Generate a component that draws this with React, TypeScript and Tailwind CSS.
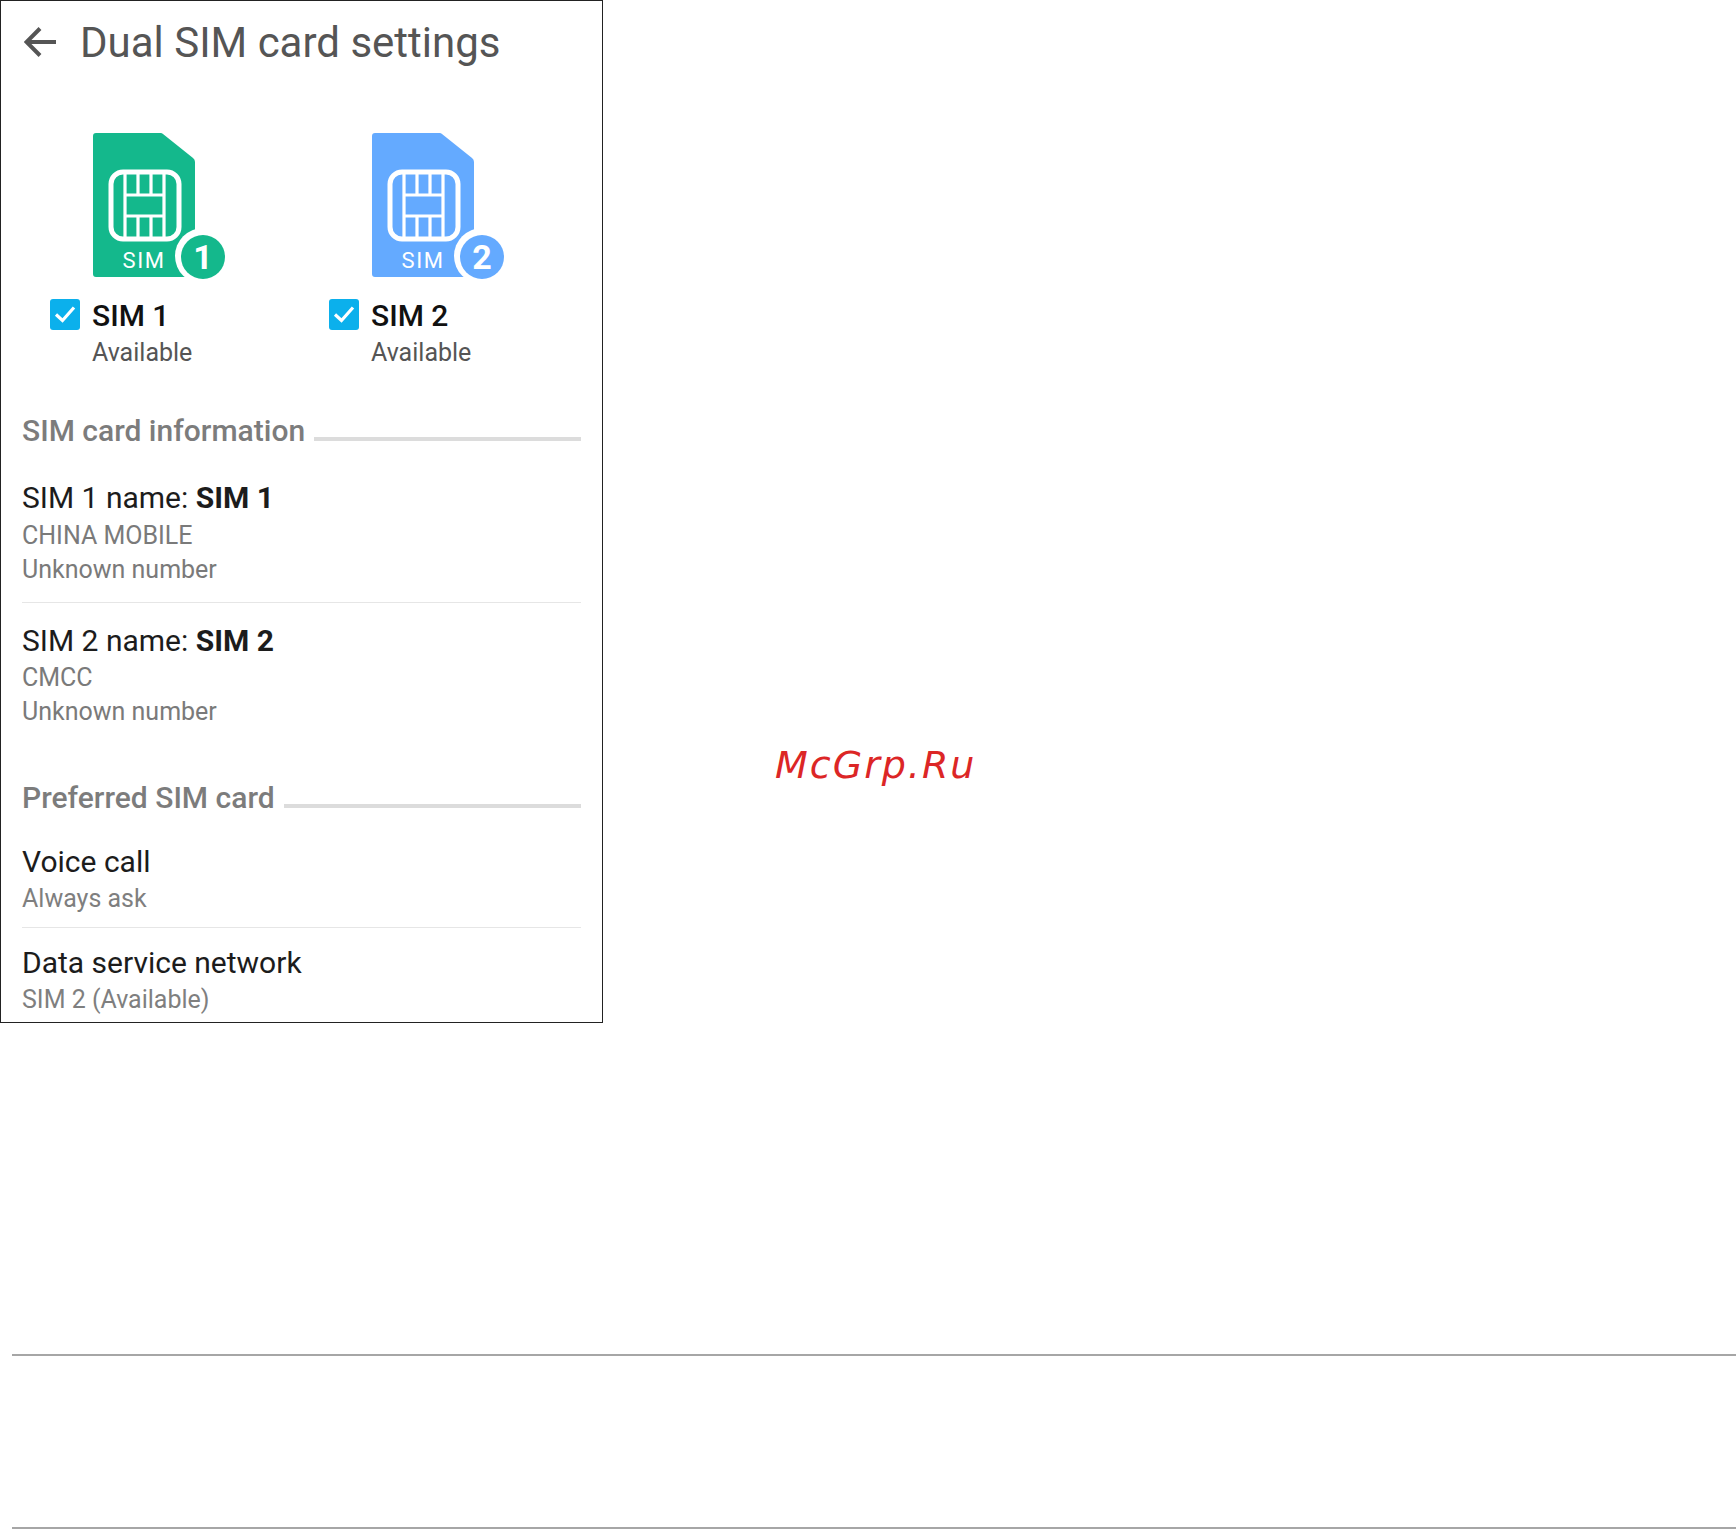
import React from "react";

const SimIcon = ({ color, num }: { color: string; num: string }) => {
  return (
    <svg width="134" height="148" viewBox="0 0 134 148" className="block">
      <path
        d="M3 0H67a4 4 0 0 1 3 1L100 25a5 5 0 0 1 2 4V141a3 3 0 0 1-3 3H3a3 3 0 0 1-3-3V3a3 3 0 0 1 3-3Z"
        fill={color}
      />
      <g fill="none" stroke="#fff">
        <rect x="18" y="39" width="68" height="67" rx="12" strokeWidth="5" />
        <path
          d="M32 40V105M71 40V105M45 40V62M58 40V62M45 83V105M58 83V105M32 62H71M32 83H71"
          strokeWidth="3.2"
        />
      </g>
      <text
        x="51"
        y="135"
        textAnchor="middle"
        fill="#fff"
        fontFamily="Roboto, sans-serif"
        fontSize="22"
        letterSpacing="1.5"
      >
        SIM
      </text>
      <circle cx="110" cy="123" r="28" fill="#fff" />
      <circle cx="110" cy="124" r="22" fill={color} />
      <text
        x="110"
        y="136"
        textAnchor="middle"
        fill="#fff"
        fontFamily="Roboto, sans-serif"
        fontWeight="700"
        fontSize="34"
      >
        {num}
      </text>
    </svg>
  );
};

const SimCard = ({ color, num }: { color: string; num: string }) => {
  return (
    <div className="w-[279px] shrink-0">
      <div className="ml-[43px]">
        <SimIcon color={color} num={num} />
      </div>
      <div className="flex items-center mt-[18px] h-[32px]">
        <div className="w-[30px] h-[31px] mb-[2px] rounded-[3px] bg-[#0bb0ec] flex items-center justify-center">
          <svg width="22" height="18" viewBox="0 0 22 18" fill="none">
            <path d="M2 9.5L8.5 15.5L20 2.5" stroke="#fff" strokeWidth="3.2" />
          </svg>
        </div>
        <span className="ml-[12px] text-[30px] font-medium text-[#111]">SIM {num}</span>
      </div>
      <div className="ml-[42px] mt-[3px] text-[25px] leading-[38px] text-[#555]">Available</div>
    </div>
  );
};

const SectionTitle = ({ title }: { title: string }) => {
  return (
    <div className="flex items-end h-[36px]">
      <span className="text-[30px] leading-[36px] font-medium text-[#7c7c7c]">{title}</span>
      <div className="flex-1 ml-[9px] mb-[8px] h-[4px] bg-[#dcdcdc]"></div>
    </div>
  );
};

const SimRow = ({ num, carrier }: { num: string; carrier: string }) => {
  return (
    <div>
      <div className="text-[30px] leading-[36px] text-[#1c1c1c]">
        SIM {num} name: <b className="font-bold">SIM {num}</b>
      </div>
      <div className="mt-[2.5px] text-[25px] leading-[34px] text-[#7a7a7a]">{carrier}</div>
      <div className="text-[25px] leading-[34px] text-[#7a7a7a]">Unknown number</div>
    </div>
  );
};

const PrefRow = ({ title, sub }: { title: string; sub: string }) => {
  return (
    <div>
      <div className="text-[30px] leading-[36px] text-[#1c1c1c]">{title}</div>
      <div className="mt-[1px] text-[25px] leading-[36px] text-[#7f7f7f]">{sub}</div>
    </div>
  );
};

export default function App() {
  return (
    <div className="w-[1736px] h-[1529px] bg-white overflow-hidden font-['Roboto',sans-serif]">
      <div className="flex items-start">
        {/* Phone screenshot */}
        <div className="w-[603px] h-[1023px] shrink-0 border border-[#222] overflow-hidden">
          <div className="flex items-center pt-[18px] pl-[23px]">
            <svg width="34" height="34" viewBox="0 0 34 34" fill="none" className="mb-[3px]">
              <path d="M32 17H3M16 3.5L2.5 17L16 30.5" stroke="#555" strokeWidth="4" />
            </svg>
            <span className="ml-[22px] text-[42px] leading-[48px] text-[#555]">Dual SIM card settings</span>
          </div>

          <div className="flex mt-[66px] pl-[49px]">
            <SimCard color="#14b88c" num="1" />
            <SimCard color="#64aaff" num="2" />
          </div>

          <div className="mx-[21px]">
            <div className="mt-[41px]">
              <SectionTitle title="SIM card information" />
            </div>
            <div className="mt-[31px] pb-[15px] border-b border-[#e6e6e6]">
              <SimRow num="1" carrier="CHINA MOBILE" />
            </div>
            <div className="mt-[20px]">
              <SimRow num="2" carrier="CMCC" />
            </div>
            <div className="mt-[51px]">
              <SectionTitle title="Preferred SIM card" />
            </div>
            <div className="mt-[28px] pb-[10px] border-b border-[#e6e6e6]">
              <PrefRow title="Voice call" sub="Always ask" />
            </div>
            <div className="mt-[17px]">
              <PrefRow title="Data service network" sub="SIM 2 (Available)" />
            </div>
          </div>
        </div>

        {/* Watermark */}
        <div className="ml-[172px] mt-[741px] text-[38px] leading-[48px] italic tracking-[2px] text-[#dc2626] font-['DejaVu_Sans',sans-serif]">
          McGrp.Ru
        </div>
      </div>

      {/* Page rules */}
      <div className="ml-[12px] mt-[331px] h-[2px] bg-[#a6a6a6]"></div>
      <div className="ml-[12px] mt-[171px] h-[2px] bg-[#a6a6a6]"></div>
    </div>
  );
}
